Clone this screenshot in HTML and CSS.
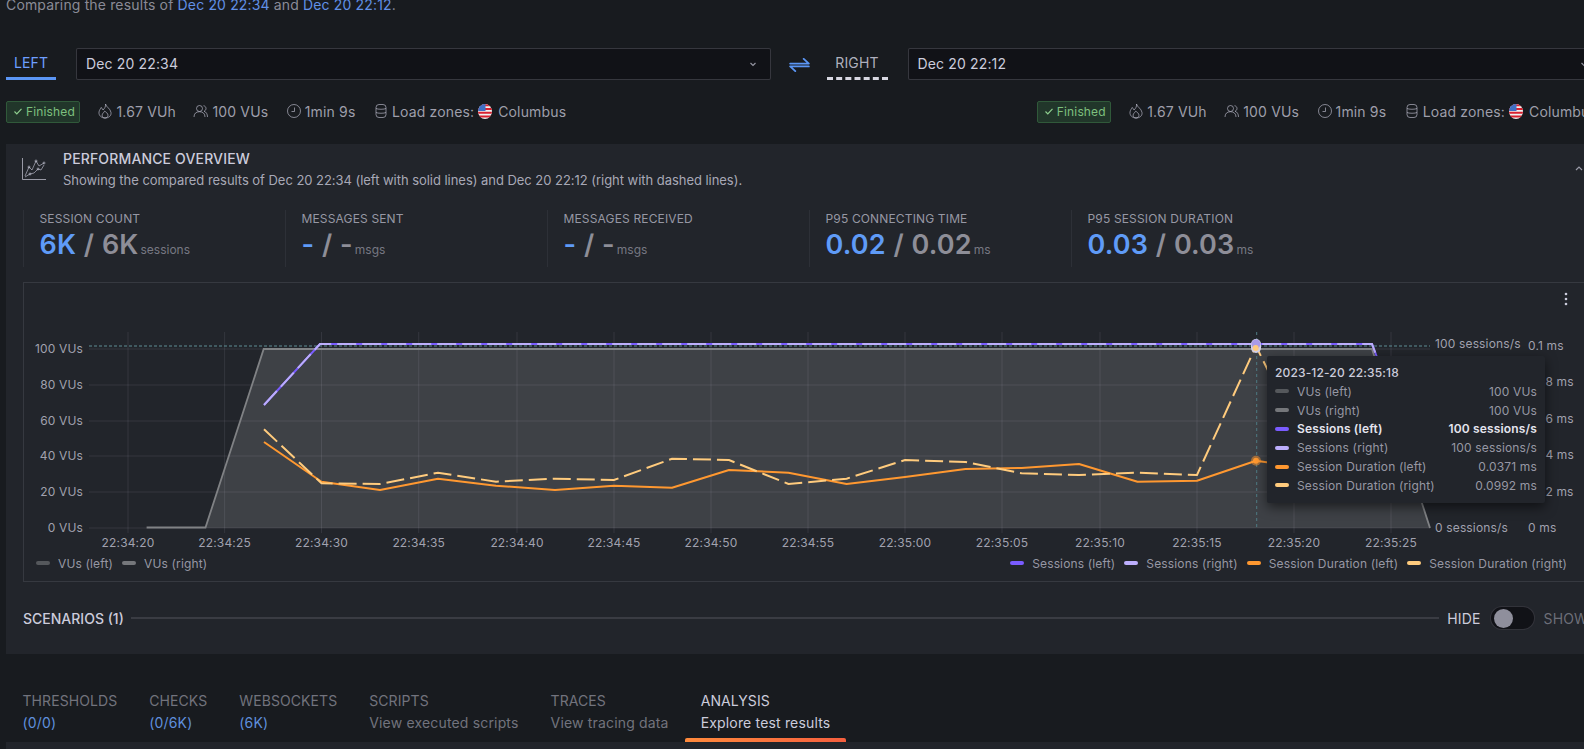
FILE: index.html
```html
<!DOCTYPE html>
<html lang="en">
<head>
<meta charset="utf-8">
<title>Compare test runs</title>
<link rel="stylesheet" href="styles.css">
</head>
<body>
<div class="page">
  <p class="intro">Comparing the results of <a class="link">Dec 20 22:34</a> and <a class="link">Dec 20 22:12</a>.</p>

  <div class="compare">
    <div class="side-tab side-left">LEFT</div>
    <div class="select"><span>Dec 20 22:34</span><svg class="chev" viewBox="0 0 10 10"><path d="M2.5 4l2.5 2.5L7.500 4"/></svg></div>
    <div class="swap"><svg viewBox="0 0 22 15"><path d="M1 6H21L15.500 1"/><path d="M21 9H1L6.500 14"/></svg></div>
    <div class="side-tab side-right">RIGHT</div>
    <div class="select"><span>Dec 20 22:12</span><svg class="chev" viewBox="0 0 10 10"><path d="M2.5 4l2.5 2.5L7.500 4"/></svg></div>
  </div>

  <div class="meta">
    <div class="meta-group">
      <span class="badge"><svg viewBox="0 0 10 10"><path d="M1.500 5.500l2.300 2.300 4.700-5"/></svg>Finished</span>
      <span class="meta-item"><svg class="ico" viewBox="0 0 16 16"><path d="M8.500 1C9 4 13.500 5.500 14 9.500 14.500 13 11.500 15 8 15 4.500 15 1.500 12.500 2 9 2.300 7 3.500 6 4 4.500 5 5 5.700 6 6 7 7.500 5.500 9 3.500 8.500 1z"/><path d="M8 15c-1.800 0-3-1.300-2.900-2.900.1-1.600 1.700-2.400 2.600-4 1.400 1.100 3.300 2.400 3.300 4.100 0 1.600-1.400 2.800-3 2.800z"/></svg>1.67 VUh</span>
      <span class="meta-item"><svg class="ico" viewBox="0 0 16 16"><circle cx="6.500" cy="5.500" r="3"/><path d="M1 14c0-3.500 2.200-5.300 5.500-5.300S12 10.500 12 14"/><path d="M10.500 2.700c1.500.2 2.500 1.400 2.500 2.800 0 1.300-.8 2.300-2 2.700 2.200.8 3.500 2.800 3.500 5.800"/></svg>100 VUs</span>
      <span class="meta-item"><svg class="ico" viewBox="0 0 16 16"><circle cx="8" cy="8" r="6.500"/><path d="M8.500 4.500V8.500H5.500"/></svg>1min 9s</span>
      <span class="meta-item"><svg class="ico" viewBox="0 0 16 16"><rect x="3" y="1.500" width="10" height="13" rx="3"/><path d="M3 5.500c1.500 1 8.500 1 10 0M3 9.500c1.500 1 8.500 1 10 0"/></svg>Load zones:<svg class="flag" viewBox="0 0 14 15"><use href="#us-flag"/></svg><span class="zone">Columbus</span></span>
    </div>
    <div class="meta-group">
      <span class="badge"><svg viewBox="0 0 10 10"><path d="M1.500 5.500l2.300 2.300 4.700-5"/></svg>Finished</span>
      <span class="meta-item"><svg class="ico" viewBox="0 0 16 16"><path d="M8.500 1C9 4 13.500 5.500 14 9.500 14.500 13 11.500 15 8 15 4.500 15 1.500 12.500 2 9 2.300 7 3.500 6 4 4.500 5 5 5.700 6 6 7 7.500 5.500 9 3.500 8.500 1z"/><path d="M8 15c-1.800 0-3-1.300-2.900-2.900.1-1.600 1.700-2.400 2.600-4 1.400 1.100 3.300 2.400 3.300 4.100 0 1.600-1.400 2.800-3 2.800z"/></svg>1.67 VUh</span>
      <span class="meta-item"><svg class="ico" viewBox="0 0 16 16"><circle cx="6.500" cy="5.500" r="3"/><path d="M1 14c0-3.500 2.200-5.300 5.500-5.300S12 10.500 12 14"/><path d="M10.500 2.700c1.500.2 2.500 1.400 2.500 2.800 0 1.300-.8 2.300-2 2.700 2.200.8 3.500 2.800 3.500 5.800"/></svg>100 VUs</span>
      <span class="meta-item"><svg class="ico" viewBox="0 0 16 16"><circle cx="8" cy="8" r="6.500"/><path d="M8.500 4.500V8.500H5.500"/></svg>1min 9s</span>
      <span class="meta-item"><svg class="ico" viewBox="0 0 16 16"><rect x="3" y="1.500" width="10" height="13" rx="3"/><path d="M3 5.500c1.500 1 8.500 1 10 0M3 9.500c1.500 1 8.500 1 10 0"/></svg>Load zones:<svg class="flag" viewBox="0 0 14 15"><use href="#us-flag"/></svg><span class="zone">Columbus</span></span>
    </div>
  </div>

  <section class="panel">
    <header class="panel-head">
      <svg class="head-icon" viewBox="0 0 24 22"><path class="axis" d="M.5 0V21.500H24"/><path d="M3 18l4-9 3 3 4-9 3 5 5-3"/><path d="M3 19l5-3 4-1 4-4 3 1 3-5"/><circle cx="7" cy="9" r="1"/><circle cx="14" cy="3" r="1"/><circle cx="22" cy="5" r="1"/><circle cx="8" cy="16" r="1"/><circle cx="16" cy="11" r="1"/></svg>
      <div class="head-text">
        <h2>PERFORMANCE OVERVIEW</h2>
        <p>Showing the compared results of Dec 20 22:34 (left with solid lines) and Dec 20 22:12 (right with dashed lines).</p>
      </div>
      <svg class="chev chev-up" viewBox="0 0 10 10"><path d="M2 6l3-3 3 3"/></svg>
    </header>

    <div class="stats">
      <div class="stat"><div class="stat-label">SESSION COUNT</div><div class="stat-value"><b class="a">6K</b> <b class="b">/</b> <b class="b">6K</b><small>sessions</small></div></div>
      <div class="stat"><div class="stat-label">MESSAGES SENT</div><div class="stat-value"><b class="a">-</b> <b class="b">/</b> <b class="b">-</b><small>msgs</small></div></div>
      <div class="stat"><div class="stat-label">MESSAGES RECEIVED</div><div class="stat-value"><b class="a">-</b> <b class="b">/</b> <b class="b">-</b><small>msgs</small></div></div>
      <div class="stat"><div class="stat-label">P95 CONNECTING TIME</div><div class="stat-value"><b class="a">0.02</b> <b class="b">/</b> <b class="b">0.02</b><small>ms</small></div></div>
      <div class="stat"><div class="stat-label">P95 SESSION DURATION</div><div class="stat-value"><b class="a">0.03</b> <b class="b">/</b> <b class="b">0.03</b><small>ms</small></div></div>
    </div>

    <div class="chart">
      <svg class="plot" viewBox="24 283 1577 270" width="1577" height="270">
        <g class="grid">
          <path d="M89 349H1430M89 385H1430M89 421H1430M89 456H1430M89 492H1430M89 528H1430"/>
          <path d="M128 332V533M224.600 332V533M321.500 332V533M418.700 332V533M517 332V533M614 332V533M711 332V533M808 332V533M905 332V533M1002 332V533M1100 332V533M1197 332V533M1294 332V533M1391 332V533"/>
        </g>
        <path class="area" d="M205.500 528L263.700 349H1372L1430 528Z"/>
        <path class="vu" d="M146.600 527.500H205.500L263.700 349H1372L1430 528"/>
        <path class="limit" d="M89 346H1430"/>
        <path class="cross" d="M1256.700 332V528"/>
        <path class="s-left" d="M264 405L320 344H1372L1395 405"/>
        <path class="s-right" d="M264 405L320 344H1372L1395 405"/>
        <path class="d-left" d="M264 442L321.500 481.700L380 490L438 478.700L496 485.700L555 490L614 485.700L672 487.700L729 470L788.500 472.700L846.600 484L905 477L965.500 469L1021.600 468L1079 464L1137.500 481.700L1197 480.700L1256 460.700L1320 470"/>
        <path class="d-right" d="M264 429.300L321.500 483.300L380 484L438 472.700L496 481.700L555 478.700L614 480L672 458.700L729 460L788.500 484L846.600 478.700L905 460L965.500 462L1021.600 473.300L1079 475L1137.500 472.700L1197 475L1256 346L1280 395"/>
        <rect class="pill" x="1251" y="339" width="10" height="14" rx="5"/>
        <circle class="dot-lav" cx="1256" cy="344" r="4.500"/>
        <circle class="dot-yel" cx="1255.700" cy="348" r="3"/>
        <circle class="halo" cx="1256" cy="460.700" r="5"/>
        <circle class="dot-org" cx="1256" cy="460.700" r="3"/>
        <g class="ax ax-end">
          <text x="83" y="353">100 VUs</text><text x="83" y="389">80 VUs</text><text x="83" y="425">60 VUs</text><text x="83" y="460">40 VUs</text><text x="83" y="496">20 VUs</text><text x="83" y="532">0 VUs</text>
        </g>
        <g class="ax ax-mid">
          <text x="128" y="547">22:34:20</text><text x="224.600" y="547">22:34:25</text><text x="321.500" y="547">22:34:30</text><text x="418.700" y="547">22:34:35</text><text x="517" y="547">22:34:40</text><text x="614" y="547">22:34:45</text><text x="711" y="547">22:34:50</text><text x="808" y="547">22:34:55</text><text x="905" y="547">22:35:00</text><text x="1002" y="547">22:35:05</text><text x="1100" y="547">22:35:10</text><text x="1197" y="547">22:35:15</text><text x="1294" y="547">22:35:20</text><text x="1391" y="547">22:35:25</text>
        </g>
        <g class="ax">
          <text x="1435" y="348">100 sessions/s</text><text x="1435" y="532">0 sessions/s</text>
          <text x="1528" y="350">0.1 ms</text><text x="1527" y="386">0.08 ms</text><text x="1527" y="423">0.06 ms</text><text x="1527" y="459">0.04 ms</text><text x="1527" y="496">0.02 ms</text><text x="1528" y="532">0 ms</text>
        </g>
        <g class="kebab"><circle cx="1566" cy="294" r="1.300"/><circle cx="1566" cy="299" r="1.300"/><circle cx="1566" cy="304" r="1.300"/></g>
      </svg>
      <div class="legend">
        <div class="legend-group">
          <span class="leg"><i class="sw c-vl"></i>VUs (left)</span>
          <span class="leg"><i class="sw c-vr"></i>VUs (right)</span>
        </div>
        <div class="legend-group">
          <span class="leg"><i class="sw c-sl"></i>Sessions (left)</span>
          <span class="leg"><i class="sw c-sr"></i>Sessions (right)</span>
          <span class="leg"><i class="sw c-dl"></i>Session Duration (left)</span>
          <span class="leg"><i class="sw c-dr"></i>Session Duration (right)</span>
        </div>
      </div>
      <div class="tooltip">
        <div class="tip-title">2023-12-20 22:35:18</div>
        <div class="tip-row"><i class="sw c-vl"></i><span>VUs (left)</span><em>100 VUs</em></div>
        <div class="tip-row"><i class="sw c-vr"></i><span>VUs (right)</span><em>100 VUs</em></div>
        <div class="tip-row tip-on"><i class="sw c-sl"></i><span>Sessions (left)</span><em>100 sessions/s</em></div>
        <div class="tip-row"><i class="sw c-sr"></i><span>Sessions (right)</span><em>100 sessions/s</em></div>
        <div class="tip-row"><i class="sw c-dl"></i><span>Session Duration (left)</span><em>0.0371 ms</em></div>
        <div class="tip-row"><i class="sw c-dr"></i><span>Session Duration (right)</span><em>0.0992 ms</em></div>
      </div>
    </div>

    <div class="scenarios">
      <span class="sc-title">SCENARIOS (1)</span>
      <span class="sc-line"></span>
      <span class="sc-on">HIDE</span>
      <span class="toggle"><i></i></span>
      <span class="sc-off">SHOW</span>
    </div>
  </section>

  <nav class="tabs">
    <a class="tab"><span class="t1">THRESHOLDS</span><span class="t2 count">(0/0)</span></a>
    <a class="tab"><span class="t1">CHECKS</span><span class="t2 count">(0/6K)</span></a>
    <a class="tab"><span class="t1">WEBSOCKETS</span><span class="t2 count">(6K)</span></a>
    <a class="tab"><span class="t1">SCRIPTS</span><span class="t2">View executed scripts</span></a>
    <a class="tab"><span class="t1">TRACES</span><span class="t2">View tracing data</span></a>
    <a class="tab tab-active"><span class="t1">ANALYSIS</span><span class="t2">Explore test results</span></a>
  </nav>
  <div class="tab-body"></div>
</div>

<svg class="defs" width="0" height="0">
  <defs>
    <clipPath id="flag-clip"><ellipse cx="7" cy="7.500" rx="7" ry="7.500"/></clipPath>
    <g id="us-flag" clip-path="url(#flag-clip)">
      <rect width="14" height="15" fill="#f0f0f0"/>
      <path d="M0 1.200H14M0 5H14M0 8.700H14M0 12.500H14" stroke="#d8202f" stroke-width="1.900"/>
      <rect width="7.500" height="7" fill="#3f6fc4"/>
    </g>
  </defs>
</svg>
</body>
</html>
```

FILE: styles.css
```css
* { box-sizing: border-box; }
html, body { margin: 0; height: 749px; overflow: hidden; background: #181b1f; }
body { font-family: Inter, "Noto Sans", sans-serif; font-size: 14px; letter-spacing: .01071em; color: #ccccdc; }
.page { width: 1602px; margin-top: -5px; padding-top: 0; }
.defs { position: absolute; }

.intro { margin: 0 0 0 6px; height: 20px; line-height: 20px; color: rgba(204,204,220,.65); }
.link { color: #6190e6; }

.compare { display: flex; align-items: stretch; height: 32px; margin: 33px 0 0 6px; width: 1596px; }
.side-tab { line-height: 29px; height: 32px; text-align: center; flex: none; position: relative; }
.side-left { width: 50px; color: #6e9fff; border-bottom: 3px solid #5b96f5; margin-right: 20px; }
.side-right { width: 61px; color: rgba(204,204,220,.85); border-bottom: 3px dashed #d8d8e2; margin-right: 20px; }
.select { flex: 1; display: flex; align-items: center; justify-content: space-between; padding: 0 12px 0 9px; background: #111217; border: 1px solid rgba(204,204,220,.2); border-radius: 2px; color: #ccccdc; line-height: 30px; }
.chev { width: 10px; height: 10px; fill: none; stroke: rgba(204,204,220,.7); stroke-width: 1.2; }
.swap { width: 56px; flex: none; display: flex; align-items: center; justify-content: center; padding-left: 2px; }
.swap svg { width: 21px; height: 14px; fill: none; stroke: #5b96f5; stroke-width: 2; stroke-linecap: round; stroke-linejoin: round; margin-top: 1px; }

.meta { display: flex; justify-content: space-between; width: 1591px; height: 22px; margin: 21px 0 0 6px; }
.meta-group { display: flex; align-items: center; gap: 17.500px; }
.badge { display: flex; align-items: center; gap: 3px; height: 22px; padding: 0 4px 2px 6px; font-size: 12px; color: #7ec07f; background: rgba(70,150,80,.22); border: 1px solid #30593a; border-radius: 2px; }
.badge svg { width: 10px; height: 10px; fill: none; stroke: #8fd08f; stroke-width: 1.2; }
.meta-item { display: flex; align-items: center; height: 22px; padding-bottom: 2px; color: rgba(204,204,220,.75); white-space: nowrap; }
.ico { width: 16px; height: 16px; margin-right: 3px; fill: none; stroke: rgba(204,204,220,.6); stroke-width: 1; }
.flag { width: 14px; height: 15px; margin: 0 6px 0 4px; }

.panel { background: #22252b; margin: 21px 0 0 6px; padding: 5px 0 24px; }
.panel-head { display: flex; align-items: center; padding: 0 18px 0 16px; }
.head-icon { width: 24px; height: 22px; margin-right: 17px; margin-top: 1px; flex: none; fill: none; stroke: rgba(204,204,220,.6); stroke-width: 1; }
.head-icon .axis { stroke: rgba(204,204,220,.7); }
.head-text { flex: 1; }
.head-text h2 { margin: 0; font-size: 14px; font-weight: 500; line-height: 20px; color: #ccccdc; }
.head-text p { margin: 3px 0 0; font-size: 13px; letter-spacing: -.04px; line-height: 16px; color: rgba(204,204,220,.8); }
.chev-up { margin-top: 0; }

.stats { display: grid; grid-template-columns: repeat(5, 262px); margin: 22px 0 0 17px; height: 52px; }
.stat { border-left: 1px solid rgba(204,204,220,.07); padding-left: 15.500px; }
.stat-label { font-size: 12px; line-height: 18px; color: rgba(204,204,220,.7); }
.stat-value { font-size: 27px; line-height: 34px; white-space: nowrap; }
.stat-value b { font-weight: 600; }
.stat-value .a { color: #5f9bf7; }
.stat-value .b { color: #8e8e98; }
.stat-value small { font-size: 12px; letter-spacing: 0; margin-left: 2px; color: rgba(204,204,220,.5); }

.chart { position: relative; margin: 20px 0 0 17px; height: 300px; border: 1px solid rgba(204,204,220,.12); }
.plot { display: block; }
.grid path { fill: none; stroke: rgba(204,204,220,.11); stroke-width: 1; }
.area { fill: rgba(255,255,255,.13); }
.vu { fill: none; stroke: #808285; stroke-width: 1.800; }
.limit { fill: none; stroke: #5e8f96; stroke-width: 1; stroke-dasharray: 3 2; }
.cross { fill: none; stroke: #4f7c84; stroke-width: 1; stroke-dasharray: 3 3; }
.s-left { fill: none; stroke: #7a5cff; stroke-width: 2; }
.s-right { fill: none; stroke: #bcaefc; stroke-width: 2; stroke-dasharray: 19 6; }
.d-left { fill: none; stroke: #ff9830; stroke-width: 2; stroke-linejoin: round; }
.d-right { fill: none; stroke: #ffcb7d; stroke-width: 2; stroke-dasharray: 18 6; }
.pill { fill: #d2cfe6; }
.dot-lav { fill: #a99be8; }
.dot-yel { fill: #ffcb7d; }
.halo { fill: rgba(255,152,48,.5); }
.dot-org { fill: #ff9830; }
.ax text { font-family: Inter, sans-serif; font-size: 12px; fill: rgba(204,204,220,.75); }
.ax-end text { text-anchor: end; }
.ax-mid text { text-anchor: middle; }
.kebab circle { fill: #ccccdc; }

.legend { display: flex; justify-content: space-between; padding: 0 34px 0 12px; height: 20px; align-items: center; font-size: 12px; color: rgba(204,204,220,.7); }
.legend-group { display: flex; gap: 9px; }
.leg { display: flex; align-items: center; gap: 8px; }
.sw { display: block; flex: none; width: 14px; height: 4px; border-radius: 2px; }
.c-vl { background: #55585c; }
.c-vr { background: #75777b; }
.c-sl { background: #7a5cff; }
.c-sr { background: #bcaefc; }
.c-dl { background: #ff9830; }
.c-dr { background: #ffcb7d; }

.tooltip { position: absolute; left: 1243px; top: 73px; width: 278px; height: 147px; padding: 8px; background: #22252b; border-radius: 2px; box-shadow: 0 4px 12px rgba(0,0,0,.55); font-size: 12px; color: rgba(204,204,220,.7); }
.tip-title { line-height: 17px; font-weight: 500; color: #ccccdc; margin-bottom: 1px; }
.tip-row { display: flex; align-items: center; height: 18.8px; }
.tip-row span { margin-left: 8px; flex: 1; }
.tip-row em { font-style: normal; }
.tip-on { font-weight: 600; color: #e4e4ee; }

.scenarios { display: flex; align-items: center; height: 24px; margin: 24px 14px 0 17px; }
.sc-title { font-weight: 500; letter-spacing: 0; color: #ccccdc; }
.sc-line { flex: 1; height: 2px; margin: 0 8px 0 7px; background: rgba(204,204,220,.14); }
.sc-on { color: #ccccdc; }
.sc-off { color: rgba(204,204,220,.45); }
.toggle { width: 45px; height: 24px; margin: 0 9px; padding: 2px 3px; background: #111217; border: 1px solid rgba(204,204,220,.18); border-radius: 12px; }
.toggle i { display: block; width: 19px; height: 19px; margin-top: 0; border-radius: 50%; background: #8f8f9c; }

.tabs { display: flex; margin: 36px 0 0; padding-left: 6.500px; letter-spacing: .08px; }
.tab { position: relative; display: flex; flex-direction: column; height: 52px; padding: 1px 16px 0; color: rgba(204,204,220,.5); }
.t1, .t2 { display: block; line-height: 20px; white-space: nowrap; }
.t2 { margin-top: 2px; letter-spacing: .17px; }
.count { color: #5f8fdc; }
.tab-active { color: #ccccdc; }
.tab-active::after { content: ""; position: absolute; left: 0; right: 0; bottom: 0; height: 4px; border-radius: 2px 2px 0 0; background: linear-gradient(90deg, #ff8a3c, #f55f3e); }
.tab-body { height: 40px; margin-left: 6px; background: #22252b; }
```
